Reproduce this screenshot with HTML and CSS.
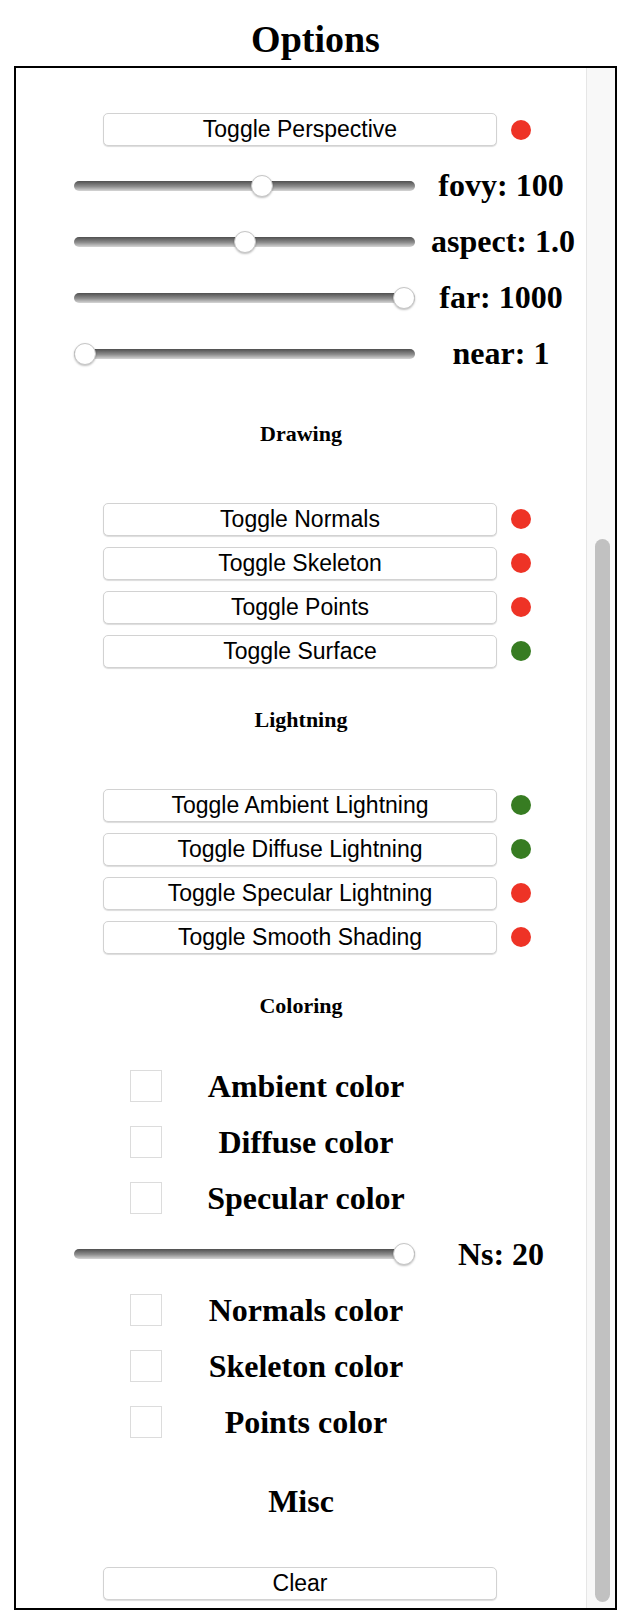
FILE: index.html
```html
<!DOCTYPE html>
<html lang="en">
<head>
<meta charset="utf-8">
<title>Options</title>
<link rel="stylesheet" href="styles.css">
</head>
<body>
<aside class="sidebar">
  <h1 class="sidebar-title">Options</h1>
  <div class="panel">
    <div class="panel-content">
      <div class="toggle-row row"><button class="btn">Toggle Perspective</button><span class="dot dot--off"></span></div>
      <div class="slider-row"><input class="range" type="range" min="0" max="180" value="100"><span class="value">fovy: 100</span></div>
      <div class="slider-row"><input class="range" type="range" min="0" max="2" step="0.1" value="1"><span class="value">aspect: 1.0</span></div>
      <div class="slider-row"><input class="range" type="range" min="1" max="1000" value="1000"><span class="value">far: 1000</span></div>
      <div class="slider-row"><input class="range" type="range" min="1" max="100" value="1"><span class="value">near: 1</span></div>

      <h3 class="section-title">Drawing</h3>
      <div class="toggle-list">
        <div class="toggle-row"><button class="btn">Toggle Normals</button><span class="dot dot--off"></span></div>
        <div class="toggle-row"><button class="btn">Toggle Skeleton</button><span class="dot dot--off"></span></div>
        <div class="toggle-row"><button class="btn">Toggle Points</button><span class="dot dot--off"></span></div>
        <div class="toggle-row"><button class="btn">Toggle Surface</button><span class="dot dot--on"></span></div>
      </div>

      <h3 class="section-title">Lightning</h3>
      <div class="toggle-list">
        <div class="toggle-row"><button class="btn">Toggle Ambient Lightning</button><span class="dot dot--on"></span></div>
        <div class="toggle-row"><button class="btn">Toggle Diffuse Lightning</button><span class="dot dot--on"></span></div>
        <div class="toggle-row"><button class="btn">Toggle Specular Lightning</button><span class="dot dot--off"></span></div>
        <div class="toggle-row"><button class="btn">Toggle Smooth Shading</button><span class="dot dot--off"></span></div>
      </div>

      <h3 class="section-title section-title--tight">Coloring</h3>
      <div class="color-row"><span class="swatch"></span><span class="color-label">Ambient color</span></div>
      <div class="color-row"><span class="swatch"></span><span class="color-label">Diffuse color</span></div>
      <div class="color-row"><span class="swatch"></span><span class="color-label">Specular color</span></div>
      <div class="slider-row"><input class="range" type="range" min="0" max="20" value="20"><span class="value">Ns: 20</span></div>
      <div class="color-row"><span class="swatch"></span><span class="color-label">Normals color</span></div>
      <div class="color-row"><span class="swatch"></span><span class="color-label">Skeleton color</span></div>
      <div class="color-row"><span class="swatch"></span><span class="color-label">Points color</span></div>

      <h2 class="section-title section-title--large">Misc</h2>
      <div class="toggle-row"><button class="btn">Clear</button></div>
    </div>
    <div class="scrollbar">
      <div class="scrollbar-thumb"></div>
    </div>
  </div>
</aside>
</body>
</html>
```

FILE: styles.css
```css
* {
  box-sizing: border-box;
}

html,
body {
  margin: 0;
  padding: 0;
  background: #fff;
}

body {
  font-family: "Liberation Serif", "Times New Roman", serif;
  color: #000;
}

.sidebar {
  width: 603px;
  margin-left: 14px;
  padding-top: 17px;
}

.sidebar-title {
  margin: 0 0 5px;
  font-size: 38px;
  line-height: 44px;
  font-weight: bold;
  text-align: center;
}

.panel {
  height: 1544px;
  border: 2px solid #000;
  display: grid;
  grid-template-columns: 570px 29px;
  overflow: hidden;
}

.panel-content {
  display: flex;
  flex-direction: column;
  padding-top: 33.5px;
}

.scrollbar {
  display: flex;
  flex-direction: column;
  justify-content: flex-end;
  padding: 6px 5px 6px 8px;
  background: #f8f8f8;
  border-left: 1px solid #e6e6e6;
}

.scrollbar-thumb {
  height: 1063px;
  border-radius: 8px;
  background: #c1c1c1;
}

.section-title {
  margin: 39px 0 56px;
  font-size: 22px;
  line-height: 26px;
  font-weight: bold;
  text-align: center;
}

.section-title--tight {
  margin-bottom: 39.5px;
}

.section-title--large {
  margin: 33px 0 47px;
  font-size: 32px;
  line-height: 37px;
}

.toggle-list {
  display: flex;
  flex-direction: column;
  gap: 11px;
}

.toggle-row {
  display: grid;
  grid-template-columns: 1fr 394px 1fr;
  align-items: center;
  padding-right: 2px;
}

.row {
  height: 56px;
}

.btn {
  grid-column: 2;
  height: 33px;
  padding: 0;
  margin: 0;
  font-family: "Liberation Sans", Arial, sans-serif;
  font-size: 23px;
  line-height: 31px;
  color: #000;
  background: #fff;
  border: 1px solid #d2d2d2;
  border-radius: 5px;
  box-shadow: 0 1px 1px rgba(0, 0, 0, 0.14);
}

.dot {
  grid-column: 3;
  width: 20px;
  height: 20px;
  margin-left: 14px;
  border-radius: 50%;
}

.dot--off {
  background: #ee3326;
}

.dot--on {
  background: #377c22;
}

.slider-row {
  display: grid;
  grid-template-columns: 341px 140px;
  column-gap: 16px;
  align-items: center;
  height: 56px;
  padding-left: 58px;
}

.range {
  -webkit-appearance: none;
  appearance: none;
  width: 341px;
  height: 22px;
  margin: 0;
  background: transparent;
}

.range::-webkit-slider-runnable-track {
  height: 10px;
  border-radius: 5px;
  background: linear-gradient(#4f4f4f, #8e8e8e 55%, #d6d6d6);
}

.range::-webkit-slider-thumb {
  -webkit-appearance: none;
  appearance: none;
  width: 22px;
  height: 22px;
  margin-top: -6px;
  border-radius: 50%;
  background: #fff;
  border: 1px solid #c6c6c6;
  box-shadow: 0 1px 2px rgba(0, 0, 0, 0.25);
}

.value,
.color-label {
  font-size: 32px;
  line-height: 37px;
  font-weight: bold;
  text-align: center;
  white-space: nowrap;
}

.color-row {
  display: grid;
  grid-template-columns: 32px 288px;
  align-items: center;
  height: 56px;
  padding-left: 114px;
}

.swatch {
  width: 32px;
  height: 32px;
  border: 1px solid #dcdcdc;
  background: #fff;
}
```
